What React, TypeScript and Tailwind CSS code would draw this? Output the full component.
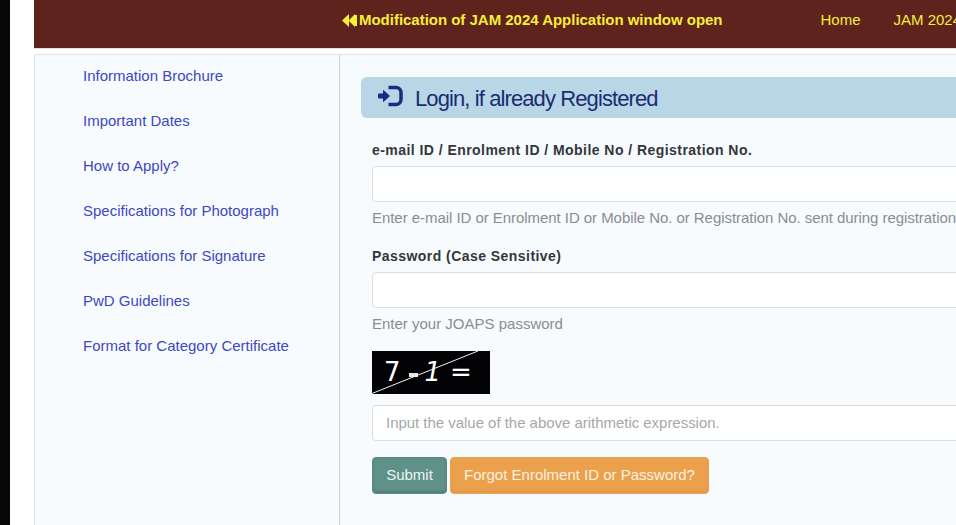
import React from "react";

const links = [
  "Information Brochure",
  "Important Dates",
  "How to Apply?",
  "Specifications for Photograph",
  "Specifications for Signature",
  "PwD Guidelines",
  "Format for Category Certificate",
];

function LoginIcon() {
  return (
    <svg width="26" height="24" viewBox="0 0 26 24" className="mb-[3px] shrink-0">
      <path d="M0.500 10h5V6.500L11.500 12l-6 5.500V14H0.500z" fill="#1a2a80" stroke="#1a2a80" strokeWidth="1" strokeLinejoin="round" />
      <path d="M10.500 3.500h7.500a5 5 0 0 1 5 5v7a5 5 0 0 1-5 5h-7.500" fill="none" stroke="#1a2a80" strokeWidth="3.500" />
    </svg>
  );
}

export default function App() {
  return (
    <div
      className="flex h-[525px] w-[956px] overflow-hidden bg-white text-[15px]"
      style={{ fontFamily: '"Liberation Sans", Arial, sans-serif' }}
    >
      <div className="w-[10px] shrink-0 bg-[#070707]" />
      <div className="ml-[24px] flex min-w-0 flex-1 flex-col">
        <header className="flex h-[49px] shrink-0 items-center justify-end overflow-hidden whitespace-nowrap border-b border-[#e6e0da] bg-[#5e231d] pb-[7px] text-[#f5ee3a]">
          <div className="flex w-[614px] shrink-0 items-center">
            <svg width="15" height="13" viewBox="0 0 15 13" className="mr-[2px] shrink-0">
              <path d="M7 0v13L0 6.500zM13 0v13L6.500 6.500z" fill="#f5ee3a" />
              <rect x="13" y="1" width="2" height="11" fill="#f5ee3a" />
            </svg>
            <span className="shrink-0 text-[15px] font-bold tracking-[-0.02px]">
              Modification of JAM 2024 Application window open
            </span>
            <span className="ml-[98px] shrink-0 text-[15px]">Home</span>
            <span className="ml-[33px] shrink-0 text-[15px]">JAM 2024</span>
          </div>
        </header>
        <div className="mt-[5px] flex min-h-0 flex-1 border-t border-l border-[#dfe3e6] bg-[#f7fbfe]">
          <nav className="flex w-[305px] shrink-0 flex-col gap-[27px] border-r border-[#ccd3d8] pt-[12px] pl-[48px] text-[#4048c0]">
            {links.map((l) => (
              <a key={l} className="h-[18px] leading-[18px]">
                {l}
              </a>
            ))}
          </nav>
          <main className="min-w-0 flex-1 pt-[22px] pl-[21px]">
            <div className="flex h-[41px] w-[640px] items-center gap-[11px] rounded-l-[6px] border-b border-[#b4d8d6] bg-[#b8d6e6] pl-[17px] text-[22px] tracking-[-0.9px] text-[#1c2c72]">
              <LoginIcon />
              <span className="pt-[2px]">Login, if already Registered</span>
            </div>
            <div className="pl-[11px]">
              <label className="mt-[23px] block h-[18px] text-[14px] leading-[18px] font-bold tracking-[0.45px] text-[#33363a]">
                e-mail ID / Enrolment ID / Mobile No / Registration No.
              </label>
              <div className="mt-[7px] h-[36px] w-[640px] rounded-[4px] border border-[#dcdfe2] bg-white" />
              <p className="mt-[7px] h-[18px] text-[15px] leading-[18px] tracking-[-0.05px] whitespace-nowrap text-[#8a8d90]">
                Enter e-mail ID or Enrolment ID or Mobile No. or Registration No. sent during registration
              </p>
              <label className="mt-[20px] block h-[18px] text-[14px] leading-[18px] font-bold tracking-[0.45px] text-[#33363a]">
                Password (Case Sensitive)
              </label>
              <div className="mt-[7px] h-[36px] w-[640px] rounded-[4px] border border-[#dcdfe2] bg-white" />
              <p className="mt-[7px] h-[18px] text-[15px] leading-[18px] text-[#8a8d90]">Enter your JOAPS password</p>
              <div
                className="relative mt-[18px] flex h-[43px] w-[118px] items-center overflow-hidden bg-[#030305] pl-[12px] text-[26px] text-white"
                style={{ fontFamily: '"DejaVu Sans", sans-serif' }}
              >
                <span>7</span>
                <span className="mt-[5px] ml-[8px] h-[4px] w-[9px] bg-[#e8e8e8]" />
                <span className="ml-[7px] italic">1</span>
                <span className="ml-[9px]">=</span>
                <svg className="absolute inset-0" width="118" height="43" viewBox="0 0 118 43">
                  <path d="M0 42.500L106 0" stroke="#f2f2f2" strokeWidth="1" />
                </svg>
              </div>
              <div className="mt-[11px] flex h-[36px] w-[640px] items-center rounded-[4px] border border-[#dcdfe2] bg-white pl-[13px] text-[15px] tracking-[-0.03px] text-[#a5a8ab]">
                Input the value of the above arithmetic expression.
              </div>
              <div className="mt-[16px] flex gap-[3px]">
                <button className="h-[37px] w-[75px] rounded-[4px] border border-[#5a8a80] bg-[#5f9188] text-[15px] text-[#eef5f2] shadow-[inset_0_-2px_3px_rgba(0,0,0,0.12)]">
                  Submit
                </button>
                <button className="h-[37px] w-[259px] rounded-[4px] border border-[#e9a24f] bg-[#eba04c] text-[15px] text-[#fdf1e0] shadow-[inset_0_-2px_3px_rgba(0,0,0,0.05)]">
                  Forgot Enrolment ID or Password?
                </button>
              </div>
            </div>
          </main>
        </div>
      </div>
    </div>
  );
}
